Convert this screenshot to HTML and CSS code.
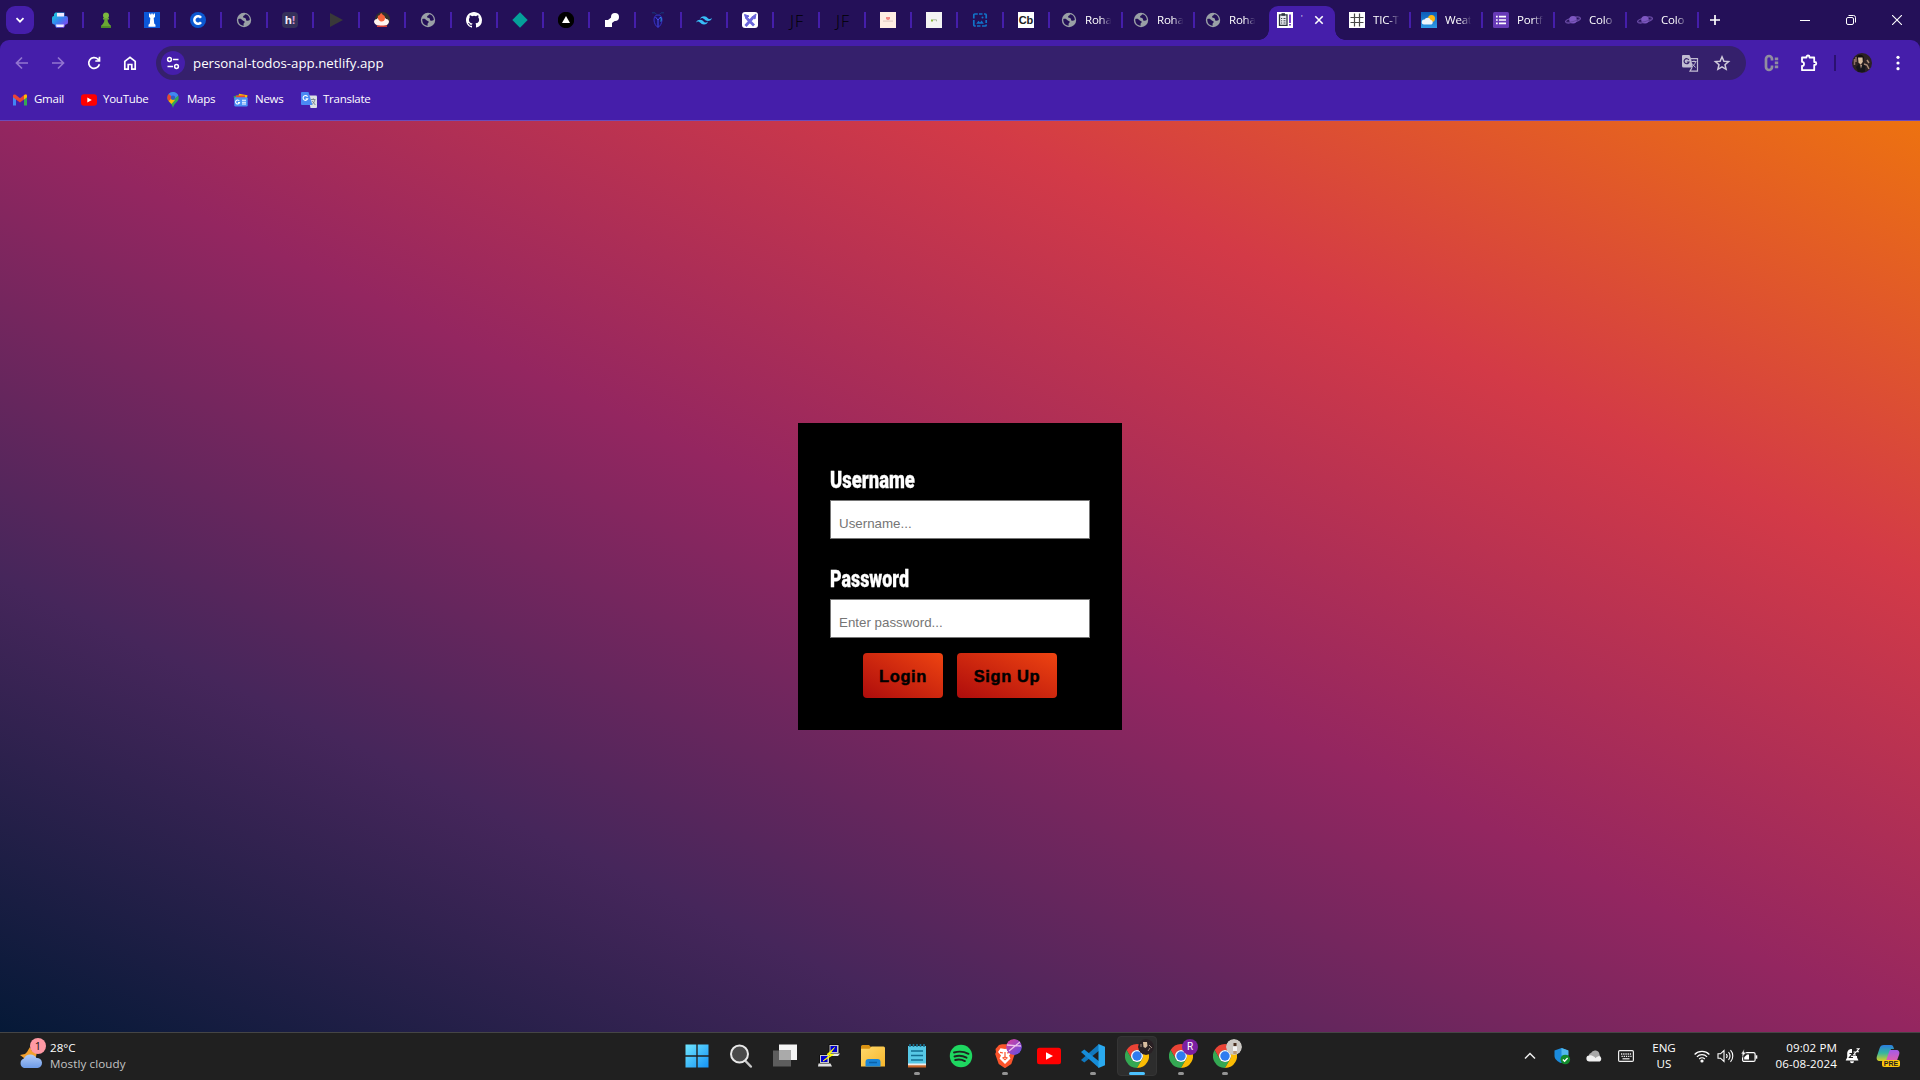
FILE: index.html
```html
<!DOCTYPE html>
<html lang="en">
<head>
<meta charset="utf-8">
<title>Todos</title>
<link rel="stylesheet" href="styles.css">
</head>
<body>
<svg class="defs" width="0" height="0">
  <defs>
    <linearGradient id="g-print" x1="0" y1="0" x2="1" y2="1"><stop offset="0" stop-color="#10d8d8"/><stop offset=".5" stop-color="#3a80f0"/><stop offset="1" stop-color="#9a35f0"/></linearGradient>
    <linearGradient id="g-win" x1="0" y1="0" x2="1" y2="1"><stop offset="0" stop-color="#6fe6ff"/><stop offset="1" stop-color="#1492f5"/></linearGradient>
    <linearGradient id="g-cloud" x1="0" y1="0" x2="0" y2="1"><stop offset="0" stop-color="#b3cdf8"/><stop offset="1" stop-color="#6d9be8"/></linearGradient>
    <linearGradient id="g-folder" x1="0" y1="0" x2="1" y2="1"><stop offset="0" stop-color="#ffd96a"/><stop offset="1" stop-color="#f7b62c"/></linearGradient>
    <linearGradient id="g-badge" x1="0" y1="0" x2="1" y2="1"><stop offset="0" stop-color="#e0409a"/><stop offset="1" stop-color="#5a50e8"/></linearGradient>
    <linearGradient id="g-cop" x1="0" y1="0" x2="0" y2="1"><stop offset="0" stop-color="#2b7de0"/><stop offset=".5" stop-color="#35b5a0"/><stop offset="1" stop-color="#d8d020"/></linearGradient>
    <linearGradient id="g-cop2" x1="0" y1="0" x2="0" y2="1"><stop offset="0" stop-color="#a45be8"/><stop offset="1" stop-color="#f0609a"/></linearGradient>
    <linearGradient id="g-sky" x1="0" y1="0" x2="0" y2="1"><stop offset="0" stop-color="#0c5cb8"/><stop offset="1" stop-color="#2f9be8"/></linearGradient>
    <symbol id="globe" viewBox="0 0 16 16"><circle cx="8" cy="8" r="7.2" fill="#9aa0a6"/><path d="M2.300 7C4.500 6.300 5.500 7 6.500 8.200c.8.9 2.200.6 2.200 1.700 0 1-1.200 1.200-1.200 2.200l.2 1.600C4 13.400 2 10.800 2.300 7zM9 2.300c.3 1.200-2 1.400-2 2.600 0 1.200 2 .6 2.700 1.500.6.9 0 2 1.200 2.300 1.200.3 2-.4 2.900-.6C13.900 4.900 11.800 2.600 9 2.300z" fill="#241058"/></symbol>
    <symbol id="planet" viewBox="0 0 16 16"><ellipse cx="8" cy="8" rx="7.600" ry="2.300" transform="rotate(-14 8 8)" fill="none" stroke="#6a4ba6" stroke-width="1.300"/><circle cx="8" cy="7.700" r="3.800" fill="#7e57c2"/><path d="M1 10.200c4 .6 10-1 13.500-3.600" fill="none" stroke="#5f4497" stroke-width=".9"/></symbol>
    <symbol id="chrome" viewBox="0 0 24 24"><path d="M12 0a12 12 0 0 1 10.400 6H12A6 6 0 0 0 6.800 9v6L1.600 6A12 12 0 0 1 12 0z" fill="#ea4335"/><path d="M1.600 6 6.800 15A6 6 0 0 0 12 18l5.200-3L12 24A12 12 0 0 1 1.600 6z" fill="#34a853"/><path d="M22.400 6A12 12 0 0 1 12 24l5.200-9A6 6 0 0 0 12 6z" fill="#fbbc04"/><circle cx="12" cy="12" r="6" fill="#fff"/><circle cx="12" cy="12" r="4.700" fill="#2f7cf0"/></symbol>
    <symbol id="peach" viewBox="0 0 16 16"><path fill="#ffeee2" d="M0 0h16v16H0z"/><path fill="#f48a84" d="M6 5h4v2L8 8.300 6 7z"/><path fill="#e3cdc4" d="M3 8.500h10v1.200H3z"/></symbol>
  </defs>
</svg>

<header class="tabstrip">
  <button class="tab-search"><svg width="10" height="10" viewBox="0 0 10 10"><path d="M1.500 3.200 5 6.700l3.500-3.500" fill="none" stroke="#fff" stroke-width="1.700"/></svg></button>
  <div class="pinned">
    <span class="pin"><svg viewBox="0 0 16 16"><path d="M3.500.5h9V4H14a2 2 0 0 1 2 2v4a2.500 2.500 0 0 1-2.500 2.500l-1.500 3.300H4l-1.500-3.300A2.500 2.500 0 0 1 0 10V6a2 2 0 0 1 2-2V2z" fill="url(#g-print)"/><path d="M5 1h7v3.500H5zM4 12.500h8L11.500 15h-7z" fill="#f0eaff"/></svg></span>
    <span class="pin"><svg viewBox="0 0 16 16"><circle cx="8" cy="3.400" r="3" fill="#7cb83e"/><path d="M5 6h6v1.500H9.600c0 3 1.300 4.500 3.400 6.200V16H3v-2.300c2.100-1.700 3.400-3.200 3.400-6.200H5z" fill="#6aa834"/><path d="M3 14.200h10V16H3z" fill="#4d8a28"/></svg></span>
    <span class="pin"><svg viewBox="0 0 16 16"><path fill="#0b57d8" d="M0 0h16v16H0z"/><path fill="#fff" d="M5 1.500h1.300v1h1v-1h1.500v1h1v-1H11V5L9.700 6l.5 5.500 1.300 1.200v2H4.500v-2l1.300-1.200L6.300 6 5 5z"/></svg></span>
    <span class="pin"><svg viewBox="0 0 16 16"><circle cx="8" cy="8" r="8" fill="#0b57d0"/><path d="M11 10.200A3.700 3.700 0 1 1 11 5.800" fill="none" stroke="#fff" stroke-width="2.500"/></svg></span>
    <span class="pin"><svg><use href="#globe"/></svg></span>
    <span class="pin"><b class="fav-h">h<i>!</i></b></span>
    <span class="pin"><svg viewBox="0 0 16 16"><path d="M2 1v14l13-7z" fill="#393939"/></svg></span>
    <span class="pin"><svg viewBox="0 0 16 16"><circle cx="8.500" cy="7.500" r="7.500" fill="#30302e"/><path d="M0 10c0-2 1.500-3 3-3 1-3 8-3 9 0 1.500-.2 3 1 3 3-1 3-3 4-7 4s-7-1-8-4z" fill="#fff4ee"/><path d="M4 3.500c2 1 2-3 4-2 0 2 3 1 3 4s-1.500 4-3.500 4S3 7 4 3.500z" fill="#f4623a"/><path d="M3 13.500h10V15H3z" fill="#d43e35"/></svg></span>
    <span class="pin"><svg><use href="#globe"/></svg></span>
    <span class="pin"><svg viewBox="0 0 16 16"><path fill="#fff" d="M8 0C3.580 0 0 3.580 0 8c0 3.540 2.290 6.530 5.470 7.590.4.070.55-.17.55-.38 0-.19-.01-.82-.01-1.490-2.010.37-2.530-.49-2.690-.94-.09-.23-.48-.94-.82-1.130-.28-.15-.68-.52-.01-.53.63-.01 1.080.58 1.230.82.72 1.210 1.870.87 2.330.66.070-.52.28-.87.51-1.070-1.780-.2-3.640-.89-3.640-3.950 0-.87.31-1.590.82-2.150-.08-.2-.36-1.020.08-2.120 0 0 .67-.21 2.200.82a7.600 7.600 0 0 1 4 0c1.530-1.040 2.200-.82 2.200-.82.44 1.100.16 1.920.08 2.120.51.56.82 1.270.82 2.150 0 3.070-1.870 3.750-3.650 3.950.29.25.54.73.54 1.480 0 1.070-.01 1.930-.01 2.200 0 .21.15.46.55.38A8 8 0 0 0 16 8c0-4.420-3.580-8-8-8z"/></svg></span>
    <span class="pin"><svg viewBox="0 0 16 16"><path d="m8 .3 7.700 7.700L8 15.700.3 8z" fill="#05a09a"/></svg></span>
    <span class="pin"><svg viewBox="0 0 16 16"><circle cx="8" cy="8" r="8.200" fill="#000"/><path d="m8 4 4 7H4z" fill="#fff"/></svg></span>
    <span class="pin"><svg viewBox="0 0 16 16"><path d="M1 8h7v7H1z" fill="#fff"/><circle cx="11" cy="5" r="4" fill="#fff"/><path d="m4 8 5-4 3 4-4 3z" fill="#fff"/></svg></span>
    <span class="pin"><svg viewBox="0 0 16 16"><path d="M2 .8h3l2 2M14 .8h-3l-2 2" stroke="#173b7c" fill="none"/><path d="M8 3c3 0 4 2 4 5s-2 6.500-4 7.500c-2-1-4-4.500-4-7.500s1-5 4-5z" fill="#1c1266" stroke="#3a32c8"/><path d="M8 8v7M5.500 5 8 8l2.500-3" stroke="#4a4cf0" fill="none"/><path d="M10.500 5c1 1.500.8 3 .3 4.500" stroke="#2aa8f0" fill="none"/></svg></span>
    <span class="pin"><svg viewBox="0 0 24 24"><path d="M12 6.200c-3.200 0-5.200 1.600-6 4.800 1.200-1.600 2.600-2.200 4.200-1.800.9.230 1.570.9 2.300 1.650C13.690 12.060 15.080 13.500 18 13.500c3.200 0 5.200-1.600 6-4.800-1.200 1.600-2.600 2.200-4.200 1.800-.9-.23-1.570-.9-2.300-1.650C16.310 7.640 14.920 6.200 12 6.200zM6 11.500c-3.200 0-5.200 1.600-6 4.800 1.200-1.600 2.600-2.200 4.200-1.800.9.230 1.570.9 2.300 1.650C7.690 17.360 9.080 18.800 12 18.800c3.200 0 5.200-1.600 6-4.800-1.200 1.600-2.600 2.200-4.200 1.800-.9-.23-1.570-.9-2.300-1.650C10.310 12.940 8.920 11.500 6 11.500z" fill="#38bdf8"/></svg></span>
    <span class="pin"><svg viewBox="0 0 16 16"><rect width="16" height="16" rx="3" fill="#fff"/><path d="M3.500 14 11 5.500M5 6.500l7 7" stroke="#6965db" stroke-width="2.800"/><path d="M2.500 2.500 7 4 4 7zM10 5l4-3-1 5z" fill="#6965db" stroke="#6965db"/></svg></span>
    <span class="pin"><span class="fav-jf">JF</span></span>
    <span class="pin"><span class="fav-jf">JF</span></span>
    <span class="pin"><svg><use href="#peach"/></svg></span>
    <span class="pin"><svg viewBox="0 0 16 16"><path fill="#f3f3f3" d="M0 0h16v16H0z"/><path d="M5 8.500h2" stroke="#8bb83a" stroke-width="2"/><path d="M7 7.800h3.500v1.500" fill="none" stroke="#a9b8a0"/></svg></span>
    <span class="pin"><svg viewBox="0 0 16 16"><path d="M1.800 6.500V3a1 1 0 0 1 1-1h3M7 2h3.500M12 2h1.200a1 1 0 0 1 1 1v3.500M14.200 8v3M14.200 12.500v.5a1 1 0 0 1-1 1H10M8.500 14H5M3.800 14h-1a1 1 0 0 1-1-1V8" fill="none" stroke="#1173c8" stroke-width="1.700"/><path d="m4.200 11.800 2.300-3L8 10.400l1.600-2 2.300 3.400z" fill="#1173c8"/><circle cx="10.500" cy="5.500" r="1" fill="#1173c8"/></svg></span>
    <span class="pin"><b class="fav-cb">Cb</b></span>
  </div>
  <div class="tabs">
    <div class="tab tab-first"><svg><use href="#globe"/></svg><span class="tab-title">Roha</span></div>
    <div class="tab"><svg><use href="#globe"/></svg><span class="tab-title">Roha</span></div>
    <div class="tab tab-nosep"><svg><use href="#globe"/></svg><span class="tab-title">Roha</span></div>
    <div class="tab tab-active"><svg viewBox="0 0 16 16"><path fill="#fff" d="M0 0h16v16H0z"/><path d="M2.500 2.800h7.500v10.500H2.500z" fill="#e8ebef" stroke="#2c3440" stroke-width="1.300"/><path d="M4.500 1.200h3.500v2.500H4.500z" fill="#2c3440"/><path d="M4 6.500h1.200M6.500 6.500h2M4 8.800h1.200M6.500 8.800h2M4 11h1.200M6.500 11h2" stroke="#2c3440" stroke-width=".9"/><path d="M13 2.500v8.500M13 12v1.600" stroke="#7036c8" stroke-width="1.900"/></svg><span class="tab-title">'</span><svg class="tab-close" viewBox="0 0 10 10"><path d="m1.300 1.300 7.400 7.400m0-7.400L1.300 8.700" stroke="#fff" stroke-width="1.600"/></svg></div>
    <div class="tab"><svg viewBox="0 0 16 16"><path fill="#fff" d="M0 0h16v16H0z"/><path d="M5.500 1.500v13M10.500 1.500v13M1.500 5.500h13M1.500 10.500h13" stroke="#4a4a4a" stroke-width="1.200"/></svg><span class="tab-title">TIC-T</span></div>
    <div class="tab"><svg viewBox="0 0 16 16"><path fill="url(#g-sky)" d="M0 0h16v16H0z"/><circle cx="10.500" cy="6.500" r="3.500" fill="#fdb813"/><path d="M3 12.500a2.500 2.500 0 0 1 .5-5 3.500 3.500 0 0 1 6.200.5 2.400 2.400 0 0 1 .8 4.500z" fill="#eef4fb"/></svg><span class="tab-title">Weat</span></div>
    <div class="tab"><svg viewBox="0 0 16 16"><rect width="16" height="16" rx="1.500" fill="#673ab7"/><path d="M3 4.700h1.700M3 8h1.700M3 11.300h1.700M6 4.700h7M6 8h7M6 11.300h7" stroke="#fff" stroke-width="1.700"/></svg><span class="tab-title">Portf</span></div>
    <div class="tab"><svg><use href="#planet"/></svg><span class="tab-title">Colo</span></div>
    <div class="tab"><svg><use href="#planet"/></svg><span class="tab-title">Colo</span></div>
  </div>
  <button class="new-tab"><svg width="12" height="12" viewBox="0 0 12 12"><path d="M6 1v10M1 6h10" stroke="#fff" stroke-width="1.700"/></svg></button>
  <div class="window-controls">
    <span><svg width="10" height="10" viewBox="0 0 10 10"><path d="M0 5.500h10" stroke="#fff"/></svg></span>
    <span><svg width="10" height="10" viewBox="0 0 10 10"><rect x=".5" y="2.500" width="7" height="7" rx="1.500" fill="none" stroke="#fff"/><path d="M2.500.5H7.500A2 2 0 0 1 9.500 2.500V7.500" fill="none" stroke="#fff"/></svg></span>
    <span><svg width="10" height="10" viewBox="0 0 10 10"><path d="m0 0 10 10M10 0 0 10" stroke="#fff" stroke-width="1.100"/></svg></span>
  </div>
</header>

<div class="browser-bar">
  <div class="toolbar">
    <div class="nav">
      <svg class="dim" viewBox="0 0 16 16"><path d="M14 8H3M8 2.500 2.500 8 8 13.500"/></svg>
      <svg class="dim" viewBox="0 0 16 16"><path d="M2 8h11M8 2.500 13.500 8 8 13.500"/></svg>
      <svg viewBox="0 0 16 16"><path d="M13.400 9.300a5.400 5.400 0 1 1-1.500-5.200L13.500 5.700M13.500 1.800v4.200H9.300"/></svg>
      <svg viewBox="0 0 16 16"><path d="M2.800 14.200V6.400L8 2.300l5.200 4.100v7.800H9.800V9.500H6.200v4.700z"/></svg>
    </div>
    <div class="omnibox">
      <span class="site-info"><svg width="14" height="14" viewBox="0 0 14 14" fill="none" stroke="#fff" stroke-width="1.500"><circle cx="3.500" cy="3.500" r="1.900"/><path d="M7 3.500h5.500M1.500 10.500H7"/><circle cx="10.500" cy="10.500" r="1.900"/></svg></span>
      <span class="url">personal-todos-app.netlify.app</span>
      <span class="omni-icons">
        <svg viewBox="0 0 18 18"><path d="M1.500 1h7l1.500 3.500 1.800 9H2.500a1.500 1.500 0 0 1-1.500-1.500V1.500z" fill="#c1bbd2"/><path d="M10 4.700h6.500v12.500H9l2-3.700" fill="none" stroke="#c1bbd2" stroke-width="1.200"/><path d="M7.800 6A2.500 2.500 0 1 0 8 8H5.800" fill="none" stroke="#352169" stroke-width="1.200"/><path d="M10.500 7.500h5M13 6.500v1M11 9.500l3.500 4M14.500 8c-.6 2-1.700 3.500-3.300 4.500" fill="none" stroke="#c1bbd2"/></svg>
        <svg viewBox="0 0 18 18"><path d="m9 2.800 1.900 4.400 4.700.4-3.600 3.100 1.100 4.600L9 12.900l-4.100 2.400L6 10.700 2.400 7.600l4.700-.4z" fill="none" stroke="#d0cadb" stroke-width="1.500"/></svg>
      </span>
    </div>
    <div class="actions">
      <span class="act"><svg width="16" height="18" viewBox="0 0 16 18"><path d="M8 6.500V5a3 3 0 0 0-6 0v8a3 3 0 0 0 6 0v-1.500" fill="none" stroke="#918da0" stroke-width="2.700"/><path d="M12.500 3.500v11" stroke="#918da0" stroke-width="3.400" stroke-dasharray="2.800 1.200"/></svg></span>
      <span class="act act-ext"><svg width="18" height="18" viewBox="0 0 18 18"><path d="M2 3.500h4.500V3A1.500 1.500 0 0 1 9.500 3v.5H14.200V8h.6a1.500 1.500 0 0 1 0 3h-.6v5.200H2v-4.200c2.700 0 2.700-4.200 0-4.200z" fill="none" stroke="#fff" stroke-width="1.800" stroke-linejoin="round"/></svg></span>
      <i class="act-divider"></i>
      <span class="act"><svg width="20" height="20" viewBox="0 0 20 20"><circle cx="10" cy="10" r="10" fill="#2c2224"/><path d="M5 4c1-3 6-3 7 1l-1 5-4 1z" fill="#110e10"/><path d="M6 4.500h4.500l.3 4.500-2 2.500-2.300-1.800z" fill="#d9bda0"/><path d="m7 11 1.700 5 2-5 3 2-1 6H6l-2-5z" fill="#15151b"/><path d="m8.200 11.500.8 4 1-3.500" fill="#c3a892"/><path d="m12 11 3 1 2 4M15 7l2 3" fill="none" stroke="#a98c78" stroke-width="1.500"/><path d="M2.500 6v6M4 4v5" stroke="#8a6d62" stroke-width="1.500"/></svg></span>
      <span class="act"><svg width="4" height="16" viewBox="0 0 4 16" fill="#fff"><circle cx="2" cy="2.300" r="1.600"/><circle cx="2" cy="8" r="1.600"/><circle cx="2" cy="13.700" r="1.600"/></svg></span>
    </div>
  </div>
  <nav class="bookmarks">
    <a class="bm bm-gmail"><svg viewBox="0 0 16 16"><path d="M1 3.500v10h3V7z" fill="#4285f4"/><path d="M15 3.500v10h-3V7z" fill="#34a853"/><path d="M1 3.800C1 2.500 2.600 2 3.600 2.800L8 6.200l4.400-3.400C13.500 2 15 2.500 15 3.800v1.400L8 10.500 1 5.200z" fill="#ea4335"/><path d="M12 3.200v4.300l3-2.300V3.800c0-1.400-1.600-1.800-3-.6z" fill="#fbbc04"/></svg><span>Gmail</span></a>
    <a class="bm bm-yt"><svg viewBox="0 0 16 16"><rect y="2.300" width="16" height="11.400" rx="3" fill="#f00"/><path d="M6.300 5.500v5L10.800 8z" fill="#fff"/></svg><span>YouTube</span></a>
    <a class="bm bm-maps"><svg viewBox="0 0 16 16"><path d="M8 0a5.700 5.700 0 0 0-5.700 5.700C2.300 10 7 10.500 8 16c1-5.500 5.700-6 5.700-10.300A5.700 5.700 0 0 0 8 0z" fill="#34a853"/><path d="M8 0a5.700 5.700 0 0 1 5.300 3.600L8 8 3.600 2C4.600.8 6.200 0 8 0z" fill="#4285f4"/><path d="M3.600 2 8 5.500 4.500 10C3.200 8.800 2.300 7.500 2.300 5.700 2.300 4.300 2.800 3 3.600 2z" fill="#ea4335"/><path d="m3.800 9.200 3-3.500 3.200 2.200L6.500 12z" fill="#fbbc04"/><circle cx="8" cy="5.700" r="2.200" fill="#315ec2"/></svg><span>Maps</span></a>
    <a class="bm bm-news"><svg viewBox="0 0 16 16"><path d="m.5 4.500 7-2.500 2 5-7 3z" fill="#34a853"/><path d="m6 1.800 8.500 1.500-1 5-8-2z" fill="#fbbc04"/><path d="M3 3.500h9v3H3z" fill="#ea4335"/><rect x="1.300" y="5.300" width="13.400" height="9.200" rx="1.200" fill="#4b90f5"/><path d="M6.300 9A2 2 0 1 0 6.500 10.500H5M9 8.300h4M9 10.200h4M9 12h4" fill="none" stroke="#fff" stroke-width="1.100"/></svg><span>News</span></a>
    <a class="bm bm-trans"><svg viewBox="0 0 16 16"><path d="M7 3.500h8a1 1 0 0 1 1 1V15a1 1 0 0 1-1 1H9.500z" fill="#dce0e4"/><path d="M1 0h6.500l4 13H1a1 1 0 0 1-1-1V1a1 1 0 0 1 1-1z" fill="#4a8af4"/><path d="M6.600 4.800A2.400 2.400 0 1 0 6.700 6.900H4.700" fill="none" stroke="#fff" stroke-width="1.100"/><path d="M10 7.500h4.500M12.300 6.300v1.200M11.300 9l3 4M13.800 8c-.3 1.800-1.300 3.300-2.500 4" fill="none" stroke="#758089" stroke-width=".9"/></svg><span>Translate</span></a>
  </nav>
</div>

<main class="page">
  <form class="login-card">
    <label class="field-label" for="username"><span class="label-user">Username</span></label>
    <input id="username" class="field" type="text" placeholder="Username...">
    <label class="field-label" for="password"><span class="label-pass">Password</span></label>
    <input id="password" class="field" type="password" placeholder="Enter password...">
    <div class="buttons">
      <button class="btn btn-login" type="button">Login</button>
      <button class="btn btn-signup" type="button">Sign Up</button>
    </div>
  </form>
</main>

<footer class="taskbar">
  <div class="weather">
    <div class="weather-icon"><svg width="26" height="30" viewBox="0 0 26 30"><path d="M12 4l2 4 5 1-2 9H5l1-3-4-3 5-1 2-2z" fill="#f3a12d"/><path d="M6 25a5 5 0 0 1 0-9.500 7 7 0 0 1 12.500-.5 5 5 0 0 1 1 10z" fill="url(#g-cloud)"/></svg><span class="weather-badge">1</span></div>
    <div class="weather-text"><span>28°C</span><span class="weather-sub">Mostly cloudy</span></div>
  </div>
  <div class="apps">
    <span class="app"><svg viewBox="0 0 24 24"><path d="M.5.500H11.300V11.300H.5zM12.700.5H23.500V11.300H12.700zM.5 12.700H11.300V23.500H.5zM12.700 12.700H23.500V23.500H12.700z" fill="url(#g-win)"/></svg></span>
    <span class="app"><svg viewBox="0 0 24 24"><path d="m16.500 17 5.300 5.500" stroke="#c8c8c8" stroke-width="2.500" stroke-linecap="round"/><circle cx="10.500" cy="10" r="8.500" fill="#4a4a4a" stroke="#e8e8e8" stroke-width="2"/></svg></span>
    <span class="app"><svg viewBox="0 0 24 24"><path d="M6 .5h18v15.500H6z" fill="#f4f4f4"/><path d="M0 6.500h18v16H0z" fill="#5d5d5d"/><path d="M6 6.500h12V16H6z" fill="#aaa"/></svg></span>
    <span class="app"><svg viewBox="0 0 24 24"><path d="M12 .5h10v9H12z" fill="#c8c8c8" stroke="#111"/><path d="M13.500 2h6.500v6h-6.500z" fill="#0000d0"/><path d="M11 9.500h12l-2 2.500H10z" fill="#e8e8e8"/><path d="M2.500 10.500h10v9h-10z" fill="#c8c8c8" stroke="#111"/><path d="M4 12h6.500v6H4z" fill="#0000d0"/><path d="M1.500 19.500h12l1.500 3H1z" fill="#e0e0e0"/><path d="m17.500 3.500-7.500 7h4l-8 6.500 10.500-6.500h-4.200z" fill="#ff0" stroke="#ff0" stroke-width=".8"/></svg></span>
    <span class="app"><svg viewBox="0 0 24 24"><path d="M0 2.500a1.500 1.500 0 0 1 1.500-1.500h6.500l2.500 2.500v3H0z" fill="#d99212"/><path d="M0 4.800h8.500l2-2.300H22.500A1.500 1.500 0 0 1 24 4v18.500H0z" fill="url(#g-folder)"/><path d="M4.500 22.500V18a3 3 0 0 1 3-3h9a3 3 0 0 1 3 3v4.500z" fill="#1a86d8"/><path d="M8 18.500h8" stroke="#0a62aa" stroke-width="1.500"/></svg></span>
    <span class="app app-open"><svg viewBox="0 0 24 24"><path d="M3 2h18v20H3z" fill="#56c8e6"/><path d="M3 21h18v2.500H3z" fill="#c86428"/><path d="M3 19.500h18v1.800H3z" fill="#eee"/><path d="M6 7h12M6 11.500h12M6 16h12" stroke="#126e92" stroke-width="1.500"/><path d="M5 0v3M8.500 0v3M12 0v3M15.500 0v3M19 0v3" stroke="#1b7596" stroke-width="1.600"/></svg></span>
    <span class="app"><svg viewBox="0 0 24 24"><circle cx="12" cy="12" r="11.200" fill="#1ed760"/><path d="M5 8.500c5-1.500 10-1 14.500 1.300M5.500 12.500c4-1.200 8.500-.7 12 1.200M6.200 16c3.500-.9 6.800-.5 9.700 1.100" fill="none" stroke="#1f2420" stroke-width="1.900" stroke-linecap="round"/></svg></span>
    <span class="app app-open"><svg viewBox="0 0 24 24"><path d="m6 1 3-.8h6L18 1l3.500 4-.5 3 .8 2-3.500 10L12 24.200 5.700 20 2.200 10 3 8l-.5-3z" fill="#fb542b"/><path d="m12 5 4.500-.8L19 8l-3 3.500 1.500 3L12 20l-5.500-5.500 1.500-3L5 8l2.500-3.800z" fill="#fff"/><path d="M7 8.300l3 .7M17 8.300l-3 .7M12 8v5l-2 1 2 1.700 2-1.700-2-1" fill="none" stroke="#fb542b" stroke-width="1.200"/></svg><svg class="badge" viewBox="0 0 16 16"><circle cx="8" cy="8" r="8" fill="url(#g-badge)"/><path d="M1 6l14 1M3 12 14 3" stroke="#edc2ee" stroke-width="1.300"/></svg></span>
    <span class="app"><svg viewBox="0 0 24 24"><rect y="3.700" width="24" height="16.600" rx="2.500" fill="#f00"/><path d="M9 8.200v7.600l7-3.800z" fill="#fff"/></svg></span>
    <span class="app app-open"><svg viewBox="0 0 24 24"><path d="M18 0v6.800L3.300 18.400 0 16z" fill="#1178bd"/><path d="M18 24v-6.800L3.300 5.600 0 8z" fill="#168dd9"/><path d="M17.500 0 24 2.800v18.400L17.500 24z" fill="#2aa9ee"/></svg></span>
    <span class="app app-open app-current"><svg><use href="#chrome"/></svg><svg class="badge" viewBox="0 0 16 16"><circle cx="8" cy="8" r="8" fill="#292024"/><path d="M5 3h4l.5 4-2 2-2-1z" fill="#d9bda0"/><path d="m11 6 3 3M10 12l2-3M3 5v3" stroke="#a28c80"/></svg></span>
    <span class="app app-open"><svg><use href="#chrome"/></svg><span class="badge badge-r">R</span></span>
    <span class="app app-open"><svg><use href="#chrome"/></svg><svg class="badge" viewBox="0 0 16 16"><circle cx="8" cy="8" r="8" fill="#cbc8c3"/><path d="M7.500 4h3v3h-3z" fill="#4a3020"/><path d="M7 7.500h4V12H7z" fill="#f4f4f4"/><path d="M7.300 12h3.400v3H7.300z" fill="#b99875"/></svg></span>
  </div>
  <div class="tray">
    <span class="t32"><svg width="12" height="12" viewBox="0 0 12 12"><path d="m1 8.500 5-5 5 5" fill="none" stroke="#eee" stroke-width="1.500"/></svg></span>
    <span class="t32"><svg width="18" height="18" viewBox="0 0 18 18"><path d="M8.500 1 1.500 3.500V9c0 3 3 5.500 6.500 7 4-1.500 7-4 7-7V3.500z" fill="#1b8bdc"/><path d="M8.500 1v7.500H15.500v-5z" fill="#52b8ee"/><circle cx="12.300" cy="12.500" r="4.800" fill="#128b2c"/><path d="m9.900 12.500 1.700 1.700 3-3.200" fill="none" stroke="#fff" stroke-width="1.300"/></svg></span>
    <span class="t32"><svg width="17" height="14" viewBox="0 0 17 14"><path d="M3 8a3 3 0 0 1 2-4 4.500 4.500 0 0 1 8.500 1.500l1 3z" fill="#a8a8a8"/><path d="M3.500 12.500a3 3 0 0 1-.2-6 4 4 0 0 1 3.500.5L9.500 8.500 13 7a3 3 0 0 1 .8 5.500z" fill="#f0f0f0"/></svg></span>
    <span class="t32"><svg width="16" height="12" viewBox="0 0 16 12"><rect x=".6" y=".6" width="14.800" height="10.800" rx="1.200" fill="none" stroke="#eee" stroke-width="1.200"/><path d="M3 4h10.500M3.500 6.300h10" stroke="#eee" stroke-width="1.300" stroke-dasharray="1.300 .9"/><path d="M4.500 8.800h7" stroke="#eee" stroke-width="1.200"/></svg></span>
    <div class="lang"><span>ENG</span><span>US</span></div>
    <div class="quick">
      <svg width="16" height="14" viewBox="0 0 16 14" fill="none" stroke="#fff" stroke-width="1.200"><path d="M.6 5.500a10.300 10.300 0 0 1 14.800 0M2.900 7.800a7.200 7.200 0 0 1 10.200 0M5.200 10a4 4 0 0 1 5.600 0"/><circle cx="8" cy="12" r="1" fill="#fff"/></svg>
      <svg width="17" height="14" viewBox="0 0 17 14" fill="none" stroke="#fff" stroke-width="1.100"><path d="M1 4.800v4.400h2.500L7 12.500v-11L3.500 4.800zM9.300 5a3 3 0 0 1 0 4M11.500 3.200a5.500 5.500 0 0 1 0 7.600M13.500 1.200a8.500 8.500 0 0 1 0 11.600"/></svg>
      <svg width="17" height="14" viewBox="0 0 17 14"><rect x="1.600" y="3.600" width="12.500" height="8.800" rx="1.500" fill="none" stroke="#fff" stroke-width="1.200"/><path d="M3.200 8.200 6 5.400h2v5.200H3.200z" fill="#fff"/><path d="M15.500 6.300v3.400" stroke="#fff" stroke-width="1.600"/><path d="M3.200 0 0 5h2L1 8.500 5 3.500H3z" fill="#fff" stroke="#202020" stroke-width=".5"/></svg>
    </div>
    <div class="clock"><span>09:02 PM</span><span>06-08-2024</span></div>
    <span class="bell"><svg width="15" height="16" viewBox="0 0 15 16"><path d="M6.500 1C3.500 1 2.200 3.300 2.200 6v3.500L.8 12v.5h12.500V12L12 9.500V8H7V1z" fill="#fff"/><path d="M5 13.300a2 2 0 0 0 4 0z" fill="#fff"/><path d="M4.500 5.500h3l-3 4H8" fill="none" stroke="#202020" stroke-width="1.200"/><path d="M8.500 4h2.500l-2.500 3H11M11.500.8H14l-2.500 3H14" fill="none" stroke="#fff" stroke-width="1.100"/></svg></span>
    <span class="copilot"><svg width="24" height="22" viewBox="0 0 24 22"><path d="M8 1h7c2 0 2.500 2 3 4h-3l-3 9c-.6 2-2 3-4 3H4c-3 0-4-2-3-5l2.500-7.500C4.200 2 5.500 1 8 1z" fill="url(#g-cop)"/><path d="M14 6h6c3 0 4 2 3 5l-1.500 4c-.8 3-2 5-5 5H9l4-12z" fill="url(#g-cop2)"/></svg><b class="pre">PRE</b></span>
  </div>
</footer>
</body>
</html>
```
FILE: styles.css
```css
* { box-sizing: border-box; }
body {
  margin: 0;
  width: 1920px;
  height: 1080px;
  overflow: hidden;
  display: flex;
  flex-direction: column;
  background: #241058;
  color: #fff;
  font-family: "Open Sans", "Noto Sans", sans-serif;
}
button { border: 0; padding: 0; font: inherit; color: inherit; }
.defs { position: absolute; }
svg { display: block; flex: none; }

/* Tab strip */
.tabstrip { height: 40px; flex: none; display: flex; align-items: stretch; padding-left: 6px; }
.tab-search {
  width: 28px; height: 28px; margin: 6px 4px 0 0;
  border-radius: 9px; background: #451eaa;
  display: flex; align-items: center; justify-content: center;
}
.pinned { display: flex; align-items: center; }
.pin { width: 46px; height: 16px; padding-left: 14px; border-right: 2px solid #451eaa; }
.pin svg, .tab svg { width: 16px; height: 16px; }
.fav-h, .fav-cb { display: block; width: 16px; height: 16px; text-align: center; line-height: 16px; }
.fav-h { background: #34305a; border-radius: 4px; font-size: 11px; color: #f3ecf8; }
.fav-h i { color: #d59ad8; font-style: normal; }
.fav-cb { background: #fff; color: #222; font: bold 11px/16px "Liberation Sans", sans-serif; }
.fav-jf { display: block; color: #000; font: 300 16px/18px "Open Sans", sans-serif; width: 18px; padding-left: 2px; letter-spacing: 1px; }
.tabs { display: flex; align-items: flex-end; }
.tab { width: 72px; height: 34px; padding: 6px 0 12px 10px; display: flex; align-items: center; gap: 8px; position: relative; }
.tab::after { content: ""; width: 2px; height: 16px; background: #451eaa; position: absolute; right: 0; top: 6px; }
.tab-first { width: 73px; padding-left: 11px; }
.tab-title {
  width: 28px; white-space: nowrap; font-size: 11.500px; line-height: 18px; letter-spacing: -.2px;
  -webkit-mask-image: linear-gradient(to right, #000 55%, transparent 94%);
  mask-image: linear-gradient(to right, #000 55%, transparent 94%);
}
.tab-nosep::after { display: none; }
.tab-active { width: 66px; margin: 0 4px 0 2px; padding-left: 8px; background: #451eaa; border-radius: 9px 9px 0 0; }
.tab-active::before, .tab-active::after {
  content: ""; position: absolute; top: auto; bottom: 0; width: 10px; height: 10px; background: none;
}
.tab-active::before { left: -10px; background: radial-gradient(circle at 0 0, transparent 9.500px, #451eaa 10px); }
.tab-active::after { right: -10px; background: radial-gradient(circle at 100% 0, transparent 9.500px, #451eaa 10px); }
.tab-active .tab-title { width: 6px; height: 11px; line-height: 11px; font-size: 7px; mask-image: none; -webkit-mask-image: none; align-self: flex-start; }
.tab-active .tab-close { width: 10px; height: 10px; margin-left: -1px; }
.new-tab { width: 32px; background: none; display: flex; align-items: center; justify-content: center; }
.window-controls { margin-left: auto; display: flex; align-items: center; }
.window-controls span { width: 46px; display: flex; justify-content: center; }

/* Toolbar and bookmarks */
.browser-bar {
  height: 81px; flex: none; background: #451eaa; border-bottom: 1px solid #6b4bbb;
  border-radius: 9px 9px 0 0; padding-top: 6px;
}
.toolbar { display: flex; align-items: center; height: 34px; }
.nav { width: 156px; padding-left: 14px; display: flex; gap: 20px; }
.nav svg { width: 16px; height: 16px; fill: none; stroke: #fff; stroke-width: 1.700; }
.nav .dim { stroke: #9275d0; }
.omnibox { width: 1590px; height: 34px; border-radius: 17px; background: #35206c; display: flex; align-items: center; padding-left: 5px; }
.site-info { width: 24px; height: 24px; border-radius: 50%; background: #451eaa; display: flex; align-items: center; justify-content: center; }
.url { margin-left: 8px; font-size: 13.300px; letter-spacing: 0; }
.omni-icons { margin-left: auto; padding-right: 15px; display: flex; gap: 14px; }
.omni-icons svg { width: 18px; height: 18px; }
.actions { display: flex; align-items: center; padding-left: 8px; }
.act { width: 36px; display: flex; justify-content: center; }
.act-ext { padding-left: 1px; }
.act-divider { width: 2px; height: 16px; background: #2b1170; margin: 0 8px; }
.bookmarks { display: flex; align-items: center; height: 39px; padding-left: 12px; font-size: 11.500px; }
.bm { display: flex; align-items: center; gap: 6px; letter-spacing: -.25px; }
.bm svg { width: 16px; height: 16px; }
.bm span { line-height: 16px; padding-bottom: 1px; }
.bm-gmail { width: 69px; }
.bm-yt { width: 84px; }
.bm-maps, .bm-news { width: 68px; }

/* Page */
.page {
  flex: 1; display: flex; align-items: center; justify-content: center;
  background: linear-gradient(to right top, #051937, #46265b, #942660, #d33a47, #ed7210);
}
.login-card { width: 324px; height: 307px; background: #000; padding: 40px 32px 0; }
.field-label { display: block; height: 37px; padding-top: 1px; font: 900 23.500px/32px Roboto, sans-serif; }
.field-label span { display: inline-block; transform-origin: left; -webkit-text-stroke: .3px #fff; }
.label-user { transform: scaleX(.785); }
.label-pass { transform: scaleX(.76); }
.field {
  display: block; width: 260px; height: 39px; margin: 0 0 23px; padding: 8px 8px 0;
  border: 1px solid #767676; border-radius: 0; background: #fff; outline: 0;
  font: 13.333px "Liberation Sans", Arial, sans-serif;
}
.field::placeholder { color: #757575; }
.buttons { display: flex; justify-content: center; gap: 14px; margin-top: -8px; }
.btn {
  height: 45px; padding-top: 1px; border-radius: 4px; color: #000;
  background: linear-gradient(to right top, #ae0c0c, #ee4411);
  font: bold 16.500px "Liberation Sans", Arial, sans-serif; letter-spacing: .6px;
  -webkit-text-stroke: .45px #000;
}
.btn-login { width: 80px; }
.btn-signup { width: 100px; }

/* Taskbar */
.taskbar { height: 48px; flex: none; background: #202020; border-top: 1px solid #454545; padding-bottom: 2px; display: flex; align-items: center; font-size: 11.600px; line-height: 16px; }
.weather { width: 675px; display: flex; align-items: center; padding-left: 18px; gap: 6px; }
.weather-icon { position: relative; width: 26px; height: 36px; padding-top: 5px; }
.weather-badge { position: absolute; left: 12px; top: 0; width: 16px; height: 16px; border-radius: 50%; background: #ff99a4; color: #111; text-align: center; font-size: 11px; }
.weather-text { display: flex; flex-direction: column; }
.weather-sub { color: #c4c4c4; letter-spacing: .1px; }
.apps { display: flex; height: 40px; }
.app { width: 44px; height: 40px; display: flex; align-items: center; justify-content: center; position: relative; }
.app > svg:first-child { width: 24px; height: 24px; }
.app-open::after { content: ""; position: absolute; left: 19px; bottom: 1px; width: 6px; height: 3px; border-radius: 2px; background: #949494; }
.app-current { width: 40px; margin: 0 2px; background: #2d2d2d; border: 1px solid #353535; border-radius: 4px; }
.app-current::after { left: 11px; bottom: 0; width: 16px; background: #4cc2ff; }
.app .badge { position: absolute; width: 16px; height: 16px; left: 23px; top: 3px; border-radius: 50%; }
.app-current .badge { left: 20px; top: 2px; }
.badge-r { background: #7b1fa2; font: 10px/16px Roboto, sans-serif; text-align: center; }
.tray { margin-left: auto; display: flex; align-items: center; }
.t32 { width: 32px; display: flex; justify-content: center; }
.lang { width: 44px; display: flex; flex-direction: column; text-align: center; }
.quick { width: 72px; padding-left: 8px; display: flex; gap: 7px; }
.clock { width: 79px; display: flex; flex-direction: column; text-align: right; letter-spacing: .1px; }
.bell { width: 30px; display: flex; justify-content: center; }
.copilot { width: 53px; height: 24px; padding-left: 9px; position: relative; }
.pre { position: absolute; left: 15px; top: 16px; width: 18px; height: 7px; border-radius: 2px; background: #fdc50c; color: #222; font: bold 7px/7px "Liberation Sans", sans-serif; text-align: center; }
```
